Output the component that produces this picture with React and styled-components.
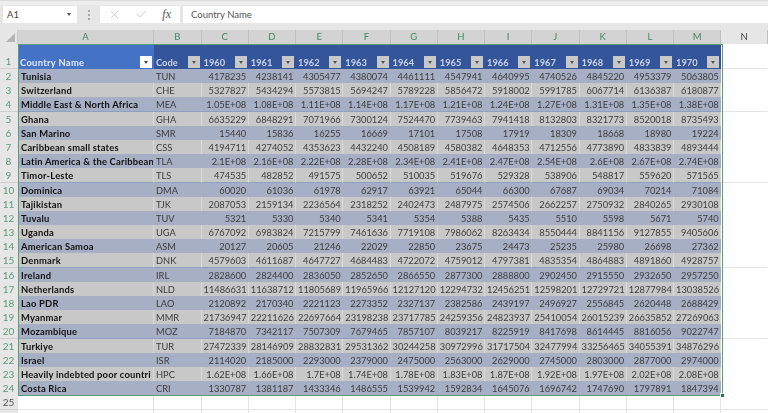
import React from 'react'
import styled, { createGlobalStyle } from 'styled-components'
import { X, Check } from 'lucide-react'

const GlobalStyle = createGlobalStyle`
  html, body { margin: 0; padding: 0; overflow: hidden; background: #fff; }
  body { font-family: "Lato", "Liberation Sans", sans-serif; }
`

const Page = styled.div`
  width: 768px;
  height: 413px;
  overflow: hidden;
  filter: blur(0.3px);
`

const FormulaBar = styled.div`
  height: 30px;
  box-sizing: border-box;
  padding: 5px 0 0 3px;
  background: #e6e6e6;
  border-top: 1px solid #dcdcdc;
  box-shadow: inset 0 4px 0 #eeeeee;
  display: flex;
  align-items: flex-start;
`

const NameBox = styled.div`
  width: 74px;
  height: 17px;
  background: #fff;
  display: flex;
  align-items: center;
  justify-content: space-between;
  padding: 0 6px 0 4px;
  box-sizing: border-box;
  font-size: 9.5px;
  color: #444;
`

const Caret = styled.span`
  width: 0;
  height: 0;
  border-left: 2.5px solid transparent;
  border-right: 2.5px solid transparent;
  border-top: 3px solid ${p => p.$color || '#555'};
`

const Grip = styled.div`
  width: 23px;
  height: 17px;
  display: flex;
  flex-direction: column;
  align-items: center;
  justify-content: center;
  gap: 2px;

  span {
    width: 2px;
    height: 2px;
    background: #a8a8a8;
  }
`

const FormulaButtons = styled.div`
  width: 80px;
  height: 17px;
  background: #fff;
  display: flex;
  align-items: center;
  justify-content: space-between;
  padding: 0 9px 0 8px;
  box-sizing: border-box;
  color: #b9b9b9;
`

const Fx = styled.span`
  font-family: "Liberation Serif", serif;
  font-style: italic;
  font-size: 12px;
  color: #555;
`

const FormulaInput = styled.div`
  flex: 1;
  height: 17px;
  margin-left: 3px;
  padding-left: 8px;
  background: #fff;
  font-size: 9.5px;
  line-height: 17px;
  color: #555;
`

const Sheet = styled.div`
  position: relative;
`

const Row = styled.div`
  display: grid;
  grid-template-columns: 18px 136px 47.5px repeat(11, 47.25px) 1fr;
  height: ${p => p.$height}px;
`

const Corner = styled.div`
  background: #e6e6e6;
  border-right: 1px solid #c8c8c8;
  box-sizing: border-box;
  position: relative;

  &::after {
    content: '';
    position: absolute;
    right: 2px;
    bottom: 2px;
    border-left: 9px solid transparent;
    border-bottom: 9px solid #b4b4b4;
  }
`

const ColHead = styled.div`
  box-sizing: border-box;
  background: ${p => (p.$on ? '#d3d3d3' : '#e6e6e6')};
  color: ${p => (p.$on ? '#3f8a62' : '#444')};
  border-right: 1px solid #c0c0c0;
  font-size: 9.5px;
  line-height: 14px;
  text-align: center;
`

const RowHead = styled.div`
  box-sizing: border-box;
  background: #e6e6e6;
  color: ${p => (p.$on ? '#5c9a7a' : '#555')};
  border-bottom: 1px solid #d0d0d0;
  font-size: 10px;
  line-height: 14px;
  padding-right: 1px;
  display: flex;
  align-items: flex-end;
  justify-content: center;
`

const HeadCell = styled.div`
  box-sizing: border-box;
  background: ${p => (p.$active ? '#4472c4' : '#34559a')};
  color: ${p => (p.$active ? '#e4ebf7' : '#c9d3e8')};
  font-size: 9.3px;
  font-weight: 700;
  letter-spacing: ${p => (p.$active ? '0.35px' : '0')};
  padding: 0 2px 1px 2px;
  display: flex;
  align-items: flex-end;
  justify-content: space-between;
  overflow: hidden;
  white-space: nowrap;
`

const FilterButton = styled.span`
  flex: none;
  width: 12px;
  height: 12px;
  box-sizing: border-box;
  background: ${p => (p.$active ? '#fff' : '#c8c8c8')};
  display: flex;
  align-items: center;
  justify-content: center;
`

const Cell = styled.div`
  box-sizing: border-box;
  background: ${p => (p.$odd ? '#a7afc5' : '#c8c8c8')};
  border-bottom: 1px solid #8ea0c0;
  border-right: 1px solid ${p => (p.$odd ? '#a7afc5' : '#d9d9d9')};
  color: #3d3d3d;
  font-size: 9.3px;
  line-height: 15px;
  padding: 0 1.5px 0 2px;
  overflow: hidden;
  white-space: nowrap;
  text-align: ${p => (p.$num ? 'right' : 'left')};
`

const NameCell = styled(Cell)`
  color: #111;
  font-weight: 700;
  font-size: 9.4px;
  letter-spacing: 0.2px;
  padding-left: 3px;
`

const BlankCell = styled.div`
  box-sizing: border-box;
  background: #fff;
  border-bottom: 1px solid #e4e4e4;
  border-right: 1px solid ${p => (p.$last ? 'transparent' : '#e4e4e4')};
`

const Selection = styled.div`
  position: absolute;
  left: 18px;
  top: 14px;
  width: 705px;
  height: 352px;
  box-sizing: border-box;
  border: 1.5px solid #569f78;
  pointer-events: none;

  &::after {
    content: '';
    position: absolute;
    right: -3px;
    bottom: -3px;
    width: 3px;
    height: 3px;
    background: #1f7a4a;
    border: 1px solid #fff;
  }
`

const columns = ['A', 'B', 'C', 'D', 'E', 'F', 'G', 'H', 'I', 'J', 'K', 'L', 'M']
const years = ['1960', '1961', '1962', '1963', '1964', '1965', '1966', '1967', '1968', '1969', '1970']

const data = [
  ['Tunisia', 'TUN', '4178235 4238141 4305477 4380074 4461111 4547941 4640995 4740526 4845220 4953379 5063805'],
  ['Switzerland', 'CHE', '5327827 5434294 5573815 5694247 5789228 5856472 5918002 5991785 6067714 6136387 6180877'],
  ['Middle East & North Africa', 'MEA', '1.05E+08 1.08E+08 1.11E+08 1.14E+08 1.17E+08 1.21E+08 1.24E+08 1.27E+08 1.31E+08 1.35E+08 1.38E+08'],
  ['Ghana', 'GHA', '6635229 6848291 7071966 7300124 7524470 7739463 7941418 8132803 8321773 8520018 8735493'],
  ['San Marino', 'SMR', '15440 15836 16255 16669 17101 17508 17919 18309 18668 18980 19224'],
  ['Caribbean small states', 'CSS', '4194711 4274052 4353623 4432240 4508189 4580382 4648353 4712556 4773890 4833839 4893444'],
  ['Latin America & the Caribbean', 'TLA', '2.1E+08 2.16E+08 2.22E+08 2.28E+08 2.34E+08 2.41E+08 2.47E+08 2.54E+08 2.6E+08 2.67E+08 2.74E+08'],
  ['Timor-Leste', 'TLS', '474535 482852 491575 500652 510035 519676 529328 538906 548817 559620 571565'],
  ['Dominica', 'DMA', '60020 61036 61978 62917 63921 65044 66300 67687 69034 70214 71084'],
  ['Tajikistan', 'TJK', '2087053 2159134 2236564 2318252 2402473 2487975 2574506 2662257 2750932 2840265 2930108'],
  ['Tuvalu', 'TUV', '5321 5330 5340 5341 5354 5388 5435 5510 5598 5671 5740'],
  ['Uganda', 'UGA', '6767092 6983824 7215799 7461636 7719108 7986062 8263434 8550444 8841156 9127855 9405606'],
  ['American Samoa', 'ASM', '20127 20605 21246 22029 22850 23675 24473 25235 25980 26698 27362'],
  ['Denmark', 'DNK', '4579603 4611687 4647727 4684483 4722072 4759012 4797381 4835354 4864883 4891860 4928757'],
  ['Ireland', 'IRL', '2828600 2824400 2836050 2852650 2866550 2877300 2888800 2902450 2915550 2932650 2957250'],
  ['Netherlands', 'NLD', '11486631 11638712 11805689 11965966 12127120 12294732 12456251 12598201 12729721 12877984 13038526'],
  ['Lao PDR', 'LAO', '2120892 2170340 2221123 2273352 2327137 2382586 2439197 2496927 2556845 2620448 2688429'],
  ['Myanmar', 'MMR', '21736947 22211626 22697664 23198238 23717785 24259356 24823937 25410054 26015239 26635852 27269063'],
  ['Mozambique', 'MOZ', '7184870 7342117 7507309 7679465 7857107 8039217 8225919 8417698 8614445 8816056 9022747'],
  ['Turkiye', 'TUR', '27472339 28146909 28832831 29531362 30244258 30972996 31717504 32477994 33256465 34055391 34876296'],
  ['Israel', 'ISR', '2114020 2185000 2293000 2379000 2475000 2563000 2629000 2745000 2803000 2877000 2974000'],
  ['Heavily indebted poor countri', 'HPC', '1.62E+08 1.66E+08 1.7E+08 1.74E+08 1.78E+08 1.83E+08 1.87E+08 1.92E+08 1.97E+08 2.02E+08 2.08E+08'],
  ['Costa Rica', 'CRI', '1330787 1381187 1433346 1486555 1539942 1592834 1645076 1696742 1747690 1797891 1847394'],
]

const Filter = ({ active }) => (
  <FilterButton $active={active}>
    <Caret $color={active ? '#444' : '#555'} />
  </FilterButton>
)

const BlankRow = ({ n, height }) => (
  <Row $height={height}>
    <RowHead>{n}</RowHead>
    {columns.map(c => <BlankCell key={c} />)}
    <BlankCell $last />
  </Row>
)

export default function App() {
  return (
    <Page>
      <GlobalStyle />
      <FormulaBar>
        <NameBox>A1<Caret /></NameBox>
        <Grip><span /><span /><span /></Grip>
        <FormulaButtons>
          <X size={13} strokeWidth={1.3} />
          <Check size={13} strokeWidth={1.3} />
          <Fx>fx</Fx>
        </FormulaButtons>
        <FormulaInput>Country Name</FormulaInput>
      </FormulaBar>
      <Sheet>
        <Row $height={14}>
          <Corner />
          {columns.map(c => <ColHead key={c} $on>{c}</ColHead>)}
          <ColHead>N</ColHead>
        </Row>
        <Row $height={25}>
          <RowHead $on>1</RowHead>
          <HeadCell $active>Country Name<Filter active /></HeadCell>
          <HeadCell>Code<Filter /></HeadCell>
          {years.map(y => <HeadCell key={y}>{y}<Filter /></HeadCell>)}
          <BlankCell $last />
        </Row>
        {data.map(([name, code, values], i) => (
          <Row key={code} $height={14.2}>
            <RowHead $on>{i + 2}</RowHead>
            <NameCell $odd={i % 2 === 0}>{name}</NameCell>
            <Cell $odd={i % 2 === 0}>{code}</Cell>
            {values.split(' ').map((v, j) => <Cell key={j} $num $odd={i % 2 === 0}>{v}</Cell>)}
            <BlankCell $last />
          </Row>
        ))}
        <BlankRow n={25} height={14.2} />
        <BlankRow height={14.2} />
        <Selection />
      </Sheet>
    </Page>
  )
}
